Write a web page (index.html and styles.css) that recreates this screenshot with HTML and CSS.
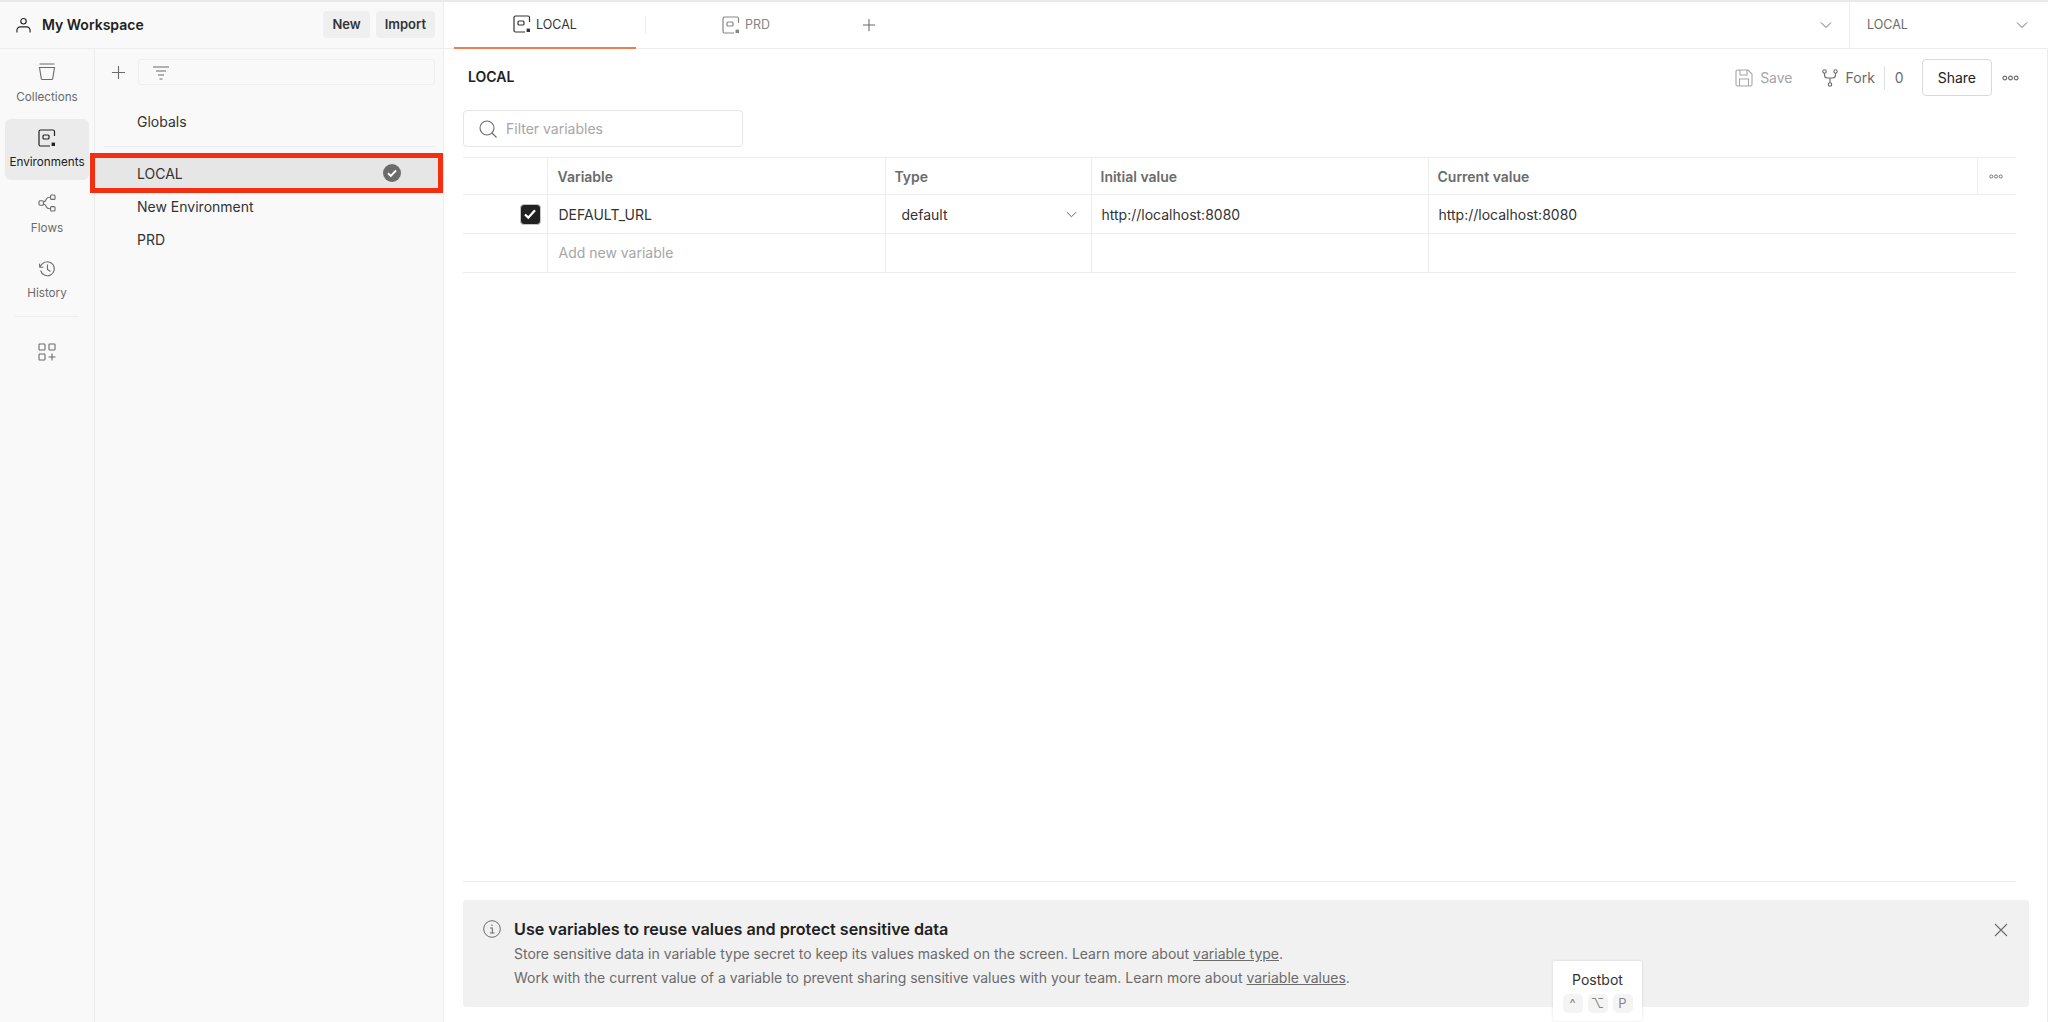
FILE: index.html
```html
<!DOCTYPE html>
<html lang="en">

<head>
	<meta charset="UTF-8">
	<title>My Workspace</title>
	<link rel="stylesheet" href="styles.css">
</head>

<body>
	<svg class="sprite" width="0" height="0">
		<symbol id="env" viewBox="0 0 18 18">
			<path d="M16.5 7V2.5a1.5 1.5 0 0 0-1.5-1.5H2.5A1.5 1.5 0 0 0 1 2.5v13A1.5 1.5 0 0 0 2.5 17H12" fill="none" stroke="currentColor" stroke-width="1.2"/>
			<rect x="5" y="6" width="6" height="4" rx="1" fill="none" stroke="currentColor" stroke-width="1.2"/>
			<rect x="13.6" y="13.6" width="3.4" height="3.4" fill="currentColor"/>
		</symbol>
		<symbol id="chev" viewBox="0 0 12 12">
			<path d="M1 3.5l5 5 5-5" fill="none" stroke="currentColor" stroke-width="1"/>
		</symbol>
		<symbol id="plus" viewBox="0 0 16 16">
			<path d="M8 1v14M1 8h14" fill="none" stroke="currentColor" stroke-width="1.2"/>
		</symbol>
		<symbol id="dots" viewBox="0 0 18 6">
			<circle cx="3" cy="3" r="2" fill="none" stroke="currentColor" stroke-width="1.2"/>
			<circle cx="9" cy="3" r="2" fill="none" stroke="currentColor" stroke-width="1.2"/>
			<circle cx="15" cy="3" r="2" fill="none" stroke="currentColor" stroke-width="1.2"/>
		</symbol>
	</svg>

	<div class="app">
		<!-- left side -->
		<aside class="sidebar">
			<div class="side-head">
				<svg class="user-icon" viewBox="0 0 16 16"><circle cx="8" cy="4" r="2.9" fill="none" stroke="currentColor" stroke-width="1.2"/><path d="M1 16v-2.5A3.5 3.5 0 0 1 4.500 10h7a3.500 3.500 0 0 1 3.500 3.500V16" fill="none" stroke="currentColor" stroke-width="1.2"/></svg>
				<span class="workspace">My Workspace</span>
				<a class="head-btn" href="javascript:;">New</a>
				<a class="head-btn" href="javascript:;">Import</a>
			</div>
			<div class="side-body">
				<nav class="rail">
					<a class="rail-item" href="javascript:;">
						<svg viewBox="0 0 18 18"><path d="M1.500 1h15M1.500 4.500h15l-1.800 11.200a1 1 0 0 1-1 .8H4.300a1 1 0 0 1-1-.8z" fill="none" stroke="currentColor" stroke-width="1.100"/></svg>
						<span>Collections</span>
					</a>
					<a class="rail-item on" href="javascript:;">
						<svg><use href="#env"/></svg>
						<span>Environments</span>
					</a>
					<a class="rail-item" href="javascript:;">
						<svg viewBox="0 0 18 18"><g fill="none" stroke="currentColor" stroke-width="1.100"><rect x="1" y="6.800" width="4.400" height="4.400" rx="1"/><rect x="12.600" y="1" width="4.400" height="4.400" rx="1"/><rect x="12.600" y="12.600" width="4.400" height="4.400" rx="1"/><path d="M5.400 8c2 0 2.200-1 3-3s1.500-1.800 4.200-1.800M5.400 10c2 0 2.200 1 3 3s1.500 1.800 4.200 1.800"/></g></svg>
						<span>Flows</span>
					</a>
					<a class="rail-item" href="javascript:;">
						<svg viewBox="0 0 18 18"><g fill="none" stroke="currentColor" stroke-width="1.100"><path d="M2.600 10.500A7 7 0 1 0 4 4.200L1.800 7"/><path d="M1.500 3.600L1.800 7.300 5.400 7.200M9.500 4.500v5l3 2"/></g></svg>
						<span>History</span>
					</a>
					<div class="rail-line"></div>
					<a class="rail-apps" href="javascript:;">
						<svg viewBox="0 0 18 18"><g fill="none" stroke="currentColor" stroke-width="1.100"><rect x="1" y="1" width="6" height="6" rx=".8"/><rect x="11" y="1" width="6" height="6" rx=".8"/><rect x="1" y="11" width="6" height="6" rx=".8"/><path d="M14 10.500v7M10.500 14h7"/></g></svg>
					</a>
				</nav>
				<div class="envs">
					<div class="envs-tools">
						<svg class="envs-plus"><use href="#plus"/></svg>
						<div class="envs-filter">
							<svg viewBox="0 0 16 14"><path d="M0 1h16M3 5h10M5 9h6M6.500 13h3" fill="none" stroke="currentColor" stroke-width="1.200"/></svg>
						</div>
					</div>
					<div class="env-globals">Globals</div>
					<ul class="env-list">
						<li class="selected">LOCAL
							<svg viewBox="0 0 18 18"><circle cx="9" cy="9" r="9" fill="#6b6b6b"/><path d="M5 9.300l2.800 2.600L13 6.500" fill="none" stroke="#fff" stroke-width="1.900"/></svg>
						</li>
						<li>New Environment</li>
						<li>PRD</li>
					</ul>
				</div>
			</div>
		</aside>

		<!-- right side -->
		<main class="main">
			<div class="tabs">
				<div class="tab on"><svg><use href="#env"/></svg>LOCAL</div>
				<div class="tab-sep"></div>
				<div class="tab"><svg><use href="#env"/></svg>PRD</div>
				<svg class="tab-plus"><use href="#plus"/></svg>
				<svg class="tab-more"><use href="#chev"/></svg>
				<div class="env-select">LOCAL<svg><use href="#chev"/></svg></div>
			</div>

			<div class="content">
				<div class="env-head">
					<h1>LOCAL</h1>
					<div class="env-actions">
						<span class="save">
							<svg viewBox="0 0 18 18"><path d="M1 2.500A1.500 1.500 0 0 1 2.500 1H13l4 4v10.500a1.500 1.500 0 0 1-1.500 1.500h-13A1.500 1.500 0 0 1 1 15.500zM5 1v5h7V1M4.500 17v-7h9v7" fill="none" stroke="currentColor" stroke-width="1.100"/></svg>
							Save
						</span>
						<span class="fork">
							<svg viewBox="0 0 16 18"><g fill="none" stroke="currentColor" stroke-width="1.100"><circle cx="2.500" cy="2.500" r="1.700"/><circle cx="13.500" cy="2.500" r="1.700"/><circle cx="8" cy="15.500" r="1.700"/><path d="M2.500 4.200V6a3 3 0 0 0 3 3h5a3 3 0 0 0 3-3V4.200M8 9v4.800"/></g></svg>
							Fork
						</span>
						<span class="fork-count">0</span>
						<a class="share" href="javascript:;">Share</a>
						<svg class="more"><use href="#dots"/></svg>
					</div>
				</div>

				<div class="filter">
					<svg viewBox="0 0 18 18"><circle cx="8" cy="8" r="7" fill="none" stroke="currentColor" stroke-width="1.100"/><path d="M13 13l4.500 4.500" fill="none" stroke="currentColor" stroke-width="1.100"/></svg>
					<span>Filter variables</span>
				</div>

				<table class="vars">
					<colgroup>
						<col class="c-check"><col class="c-name"><col class="c-type"><col class="c-init"><col class="c-cur"><col class="c-more">
					</colgroup>
					<tr class="vars-head">
						<th></th>
						<th>Variable</th>
						<th>Type</th>
						<th>Initial value</th>
						<th>Current value</th>
						<th class="cell-more"><svg><use href="#dots"/></svg></th>
					</tr>
					<tr class="vars-row">
						<td class="cell-check"><span class="checkbox"><svg viewBox="0 0 14 14"><path d="M2 7.500l3.300 3.200L12 3.300" fill="none" stroke="#fff" stroke-width="2.300"/></svg></span></td>
						<td class="cell-name">DEFAULT_URL</td>
						<td class="cell-type">default<svg><use href="#chev"/></svg></td>
						<td>http://localhost:8080</td>
						<td class="cell-cur">http://localhost:8080</td>
						<td></td>
					</tr>
					<tr class="vars-new">
						<td></td>
						<td class="cell-name">Add new variable</td>
						<td></td>
						<td></td>
						<td class="cell-cur"></td>
						<td></td>
					</tr>
				</table>

				<div class="banner">
					<svg class="banner-info" viewBox="0 0 18 18"><circle cx="9" cy="9" r="8.300" fill="none" stroke="currentColor" stroke-width="1"/><path d="M7 8h2.300v5M7 13h4.500M9 4.500v1.600" fill="none" stroke="currentColor" stroke-width="1.100"/></svg>
					<div class="banner-text">
						<h2>Use variables to reuse values and protect sensitive data</h2>
						<p>Store sensitive data in variable type secret to keep its values masked on the screen. Learn more about <a href="javascript:;">variable type</a>.</p>
						<p>Work with the current value of a variable to prevent sharing sensitive values with your team. Learn more about <a href="javascript:;">variable values</a>.</p>
					</div>
					<svg class="banner-close" viewBox="0 0 14 14"><path d="M1 1l12 12M13 1L1 13" fill="none" stroke="currentColor" stroke-width="1.100"/></svg>
				</div>
			</div>

			<!-- tooltip over the banner -->
			<div class="postbot">
				<div>Postbot</div>
				<div class="keys"><kbd>^</kbd><kbd>⌥</kbd><kbd>P</kbd></div>
			</div>
		</main>
	</div>
</body>

</html>
```

FILE: styles.css
```css
* {
	margin: 0;
	padding: 0;
	box-sizing: border-box;
}
html, body {
	height: 100%;
	overflow: hidden;
}
body {
	font-family: Inter, "Liberation Sans", sans-serif;
	font-size: 14px;
	color: #212121;
	background-color: #fff;
}
a {
	text-decoration: none;
	color: inherit;
}
li {
	list-style: none;
}
svg {
	display: block;
	flex: none;
}
.sprite {
	position: absolute;
}
.app {
	display: flex;
	height: 1022px;
	border-top: 2px solid #e9e9e9;
}

/* sidebar */
.sidebar {
	display: flex;
	flex-direction: column;
	width: 444px;
	background-color: #f9f9f9;
	border-right: 1px solid #ededed;
}
.side-head {
	display: flex;
	align-items: center;
	gap: 6px;
	height: 47px;
	padding: 0 8px 1px 16px;
	border-bottom: 1px solid #ededed;
}
.user-icon {
	width: 15px;
	height: 16px;
	margin-right: 5px;
	color: #212121;
}
.workspace {
	flex: 1;
	font-size: 14px;
	font-weight: 600;
}
.head-btn {
	height: 27px;
	padding: 0 9px;
	border-radius: 4px;
	font-size: 13px;
	font-weight: 600;
	line-height: 27px;
	color: #333;
	background-color: #efefef;
}
.side-body {
	display: flex;
	flex: 1;
}
.rail {
	display: flex;
	flex-direction: column;
	align-items: center;
	width: 95px;
	padding: 4px 5px 0;
	border-right: 1px solid #ededed;
}
.rail-item {
	display: flex;
	flex-direction: column;
	align-items: center;
	width: 84px;
	height: 61px;
	margin-bottom: 4.500px;
	padding-top: 10px;
	border-radius: 6px;
	font-size: 11.700px;
	color: #6b6b6b;
}
.rail-item svg {
	width: 18px;
	height: 18px;
	margin-bottom: 8.500px;
}
.rail-item.on {
	color: #212121;
	background-color: #ebebeb;
}
.rail-line {
	width: 64px;
	height: 1px;
	margin-top: 1px;
	background-color: #ededed;
}
.rail-apps {
	margin-top: 26px;
	color: #6b6b6b;
}
.rail-apps svg {
	width: 18px;
	height: 18px;
}
.envs {
	flex: 1;
	padding: 10px 8px 0 0;
}
.envs-tools {
	display: flex;
	align-items: center;
	height: 26px;
	margin-bottom: 0;
}
.envs-plus {
	width: 15px;
	height: 15px;
	margin: 0 12px 0 16px;
	color: #6b6b6b;
}
.envs-filter {
	flex: 1;
	height: 26px;
	padding: 6px 14px;
	border: 1px solid #efefef;
	border-radius: 3px;
}
.envs-filter svg {
	width: 16px;
	height: 14px;
	color: #6b6b6b;
}
.env-globals {
	height: 62px;
	margin-left: 9px;
	padding: 26px 0 0 33px;
	border-bottom: 1px solid #ededed;
	color: #333;
	line-height: 22px;
	font-size: 14px;
}
.env-list {
	margin-top: 6px;
	margin-right: -8px;
	margin-left: -5px;
}
.env-list li {
	display: flex;
	align-items: center;
	justify-content: space-between;
	height: 33px;
	padding: 0 42px 0 47px;
	font-size: 14px;
	color: #333;
}
.env-list li.selected {
	height: 40px;
	padding: 0 37px 0 42px;
	margin-bottom: -3px;
	background-color: #e6e6e6;
	border: 5px solid #f42e10;
}
.env-list li svg {
	width: 18px;
	height: 18px;
}

/* main */
.main {
	position: relative;
	display: flex;
	flex-direction: column;
	flex: 1;
	min-width: 0;
}
.tabs {
	display: flex;
	align-items: center;
	height: 47px;
	padding-left: 10px;
	border-bottom: 1px solid #ededed;
}
.tab {
	display: flex;
	align-items: center;
	justify-content: center;
	gap: 5px;
	width: 182px;
	height: 47px;
	margin-bottom: -1px;
	padding-bottom: 1px;
	font-size: 12.500px;
	color: #858585;
	border-bottom: 1px solid transparent;
}
.tab svg {
	width: 18px;
	height: 18px;
}
.tab.on {
	color: #333;
	border-bottom: 2px solid #ef7d52;
}
.tab-sep {
	width: 1px;
	height: 18px;
	margin: 0 9px;
	background-color: #ededed;
}
.tab-plus {
	width: 14px;
	height: 14px;
	margin-left: 25px;
	color: #6b6b6b;
}
.tab-more {
	width: 12px;
	height: 12px;
	margin-left: auto;
	margin-right: 17px;
	color: #6b6b6b;
}
.env-select {
	display: flex;
	align-items: center;
	justify-content: space-between;
	width: 199px;
	height: 46px;
	padding: 0 20px 1px 17px;
	border-left: 1px solid #ededed;
	font-size: 12.500px;
	color: #6b6b6b;
}
.env-select svg {
	width: 12px;
	height: 12px;
}
.content {
	display: flex;
	flex-direction: column;
	flex: 1;
	padding: 0 19px 15px 19px;
	border-right: 1px solid #ededed;
}
.env-head {
	display: flex;
	align-items: center;
	justify-content: space-between;
	height: 58px;
	padding-bottom: 1px;
}
.env-head h1 {
	margin-left: 5px;
	margin-bottom: 2px;
	font-size: 14px;
	font-weight: 600;
}
.env-actions {
	display: flex;
	align-items: center;
	font-size: 14px;
	margin-right: 9px;
}
.env-actions svg {
	width: 18px;
	height: 18px;
}
.save {
	display: flex;
	align-items: center;
	gap: 7px;
	color: #a6a6a6;
}
.fork {
	display: flex;
	align-items: center;
	gap: 8px;
	margin-left: 29px;
	padding-right: 9px;
	color: #6b6b6b;
	border-right: 1px solid #e0e0e0;
	height: 24px;
}
.env-actions .fork svg {
	width: 16px;
}
.fork-count {
	margin-left: 10px;
	color: #6b6b6b;
}
.share {
	height: 37px;
	margin-left: 18px;
	padding: 0 15px;
	border: 1px solid #d9d9d9;
	border-radius: 4px;
	line-height: 35px;
	color: #212121;
}
.env-actions .more {
	width: 17px;
	height: 6px;
	margin-left: 10px;
	color: #6b6b6b;
}
.filter {
	display: flex;
	align-items: center;
	gap: 9px;
	width: 280px;
	height: 37px;
	margin-top: 3px;
	padding-left: 15px;
	border: 1px solid #e6e6e6;
	border-radius: 4px;
	color: #a6a6a6;
}
.filter svg {
	width: 18px;
	height: 18px;
	color: #6b6b6b;
}
.vars {
	width: 1553px;
	margin-top: 10px;
	border-collapse: collapse;
	table-layout: fixed;
	font-size: 14px;
}
.c-check { width: 84px; }
.c-name { width: 338px; }
.c-type { width: 206px; }
.c-init { width: 337px; }
.c-cur { width: 549px; }
.c-more { width: 39px; }
.vars th, .vars td {
	padding: 0 10px;
	border: 1px solid #ededed;
	text-align: left;
	white-space: nowrap;
}
.vars tr > :first-child {
	border-left: 0;
}
.vars tr > :last-child {
	border-right: 0;
}
.vars th {
	font-weight: 600;
	color: #6b6b6b;
}
.vars th:nth-child(3), .vars th:nth-child(4), .vars th:nth-child(5) {
	padding-left: 9px;
}
.vars-head th {
	height: 37px;
}
.vars-row td {
	height: 39px;
	color: #333;
}
.vars-new td {
	height: 39px;
	padding-bottom: 2px;
	color: #a6a6a6;
}
.vars .cell-name {
	padding-left: 11px;
}
.vars td.cell-cur {
	border-right: 0;
}
.vars td:last-child {
	border-left: 0;
}
.vars .cell-more {
	padding: 0 0 0 11px;
}
.cell-more svg {
	width: 14px;
	height: 5px;
	color: #6b6b6b;
}
.vars .cell-check {
	padding: 0 6px 0 0;
}
.checkbox {
	display: flex;
	align-items: center;
	justify-content: center;
	width: 21px;
	height: 21px;
	margin-left: auto;
	border: 1px solid #c4c4c4;
	border-radius: 4px;
	background-color: #212121;
}
.checkbox svg {
	width: 14px;
	height: 14px;
}
.vars .cell-type {
	position: relative;
	padding-left: 16px;
}
.cell-type svg {
	position: absolute;
	right: 14px;
	top: 14px;
	width: 11px;
	height: 11px;
	color: #555;
}
.banner {
	position: relative;
	display: flex;
	align-items: flex-start;
	gap: 13px;
	width: 1566px;
	height: 107px;
	margin-top: auto;
	padding: 19px 21px 0 20px;
	border-radius: 3px;
	background-color: #f1f1f1;
}
.banner::before {
	content: "";
	position: absolute;
	top: -19px;
	left: 0;
	width: 1553px;
	height: 1px;
	background-color: #ededed;
}
.banner-info {
	width: 18px;
	height: 18px;
	margin-top: 1px;
	color: #6b6b6b;
}
.banner-text {
	flex: 1;
	color: #6b6b6b;
	font-size: 14px;
	line-height: 23.500px;
}
.banner-text h2 {
	margin-bottom: 3px;
	font-size: 16.150px;
	font-weight: 600;
	line-height: 20px;
	color: #212121;
}
.banner-text a {
	text-decoration: underline;
}
.banner-close {
	width: 14px;
	height: 14px;
	margin-top: 4px;
	color: #6b6b6b;
}
.postbot {
	position: absolute;
	left: 1109px;
	top: 959px;
	width: 89px;
	height: 60px;
	padding-top: 10px;
	border-radius: 2px;
	background-color: #fff;
	box-shadow: 0 0 3px rgba(0, 0, 0, 0.12);
	text-align: center;
	font-size: 14px;
	color: #333;
}
.keys {
	display: flex;
	justify-content: center;
	gap: 5px;
	margin-top: 6px;
}
.keys kbd {
	width: 20px;
	height: 19px;
	border-radius: 5px;
	font-family: inherit;
	font-size: 13px;
	line-height: 19px;
	color: #858585;
	background-color: #f4f4f4;
}
```
